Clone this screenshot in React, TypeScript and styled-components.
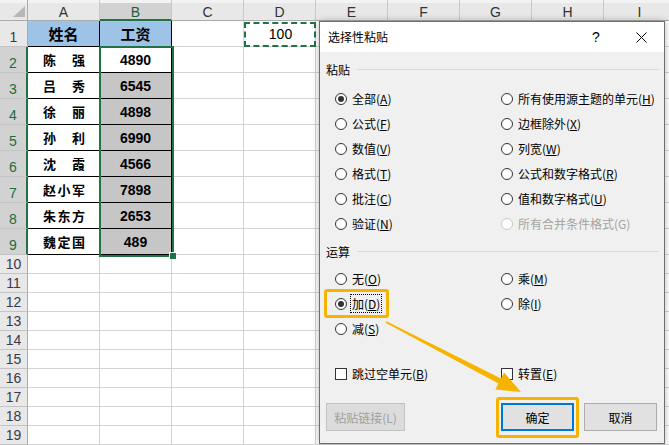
import React from "react";
import styled, { createGlobalStyle } from "styled-components";

const GREEN = "#217346";
const GOLD = "#f6b400";
const BLUE = "#9dc3e6";
const SEL = "#c6c6c6";

const GlobalStyle = createGlobalStyle`
  * { box-sizing: border-box; }
  html, body { margin: 0; padding: 0; background: #fff; overflow: hidden; }
  body { font-family: "Liberation Sans", "Noto Sans CJK SC", sans-serif; }
`;

const COLS = ["A", "B", "C", "D", "E", "F", "G", "H", "I"];
const names = ["陈强", "吕秀", "徐丽", "孙利", "沈霞", "赵小军", "朱东方", "魏定国"];
const pays = ["4890", "6545", "4898", "6990", "4566", "7898", "2653", "489"];

const Page = styled.div`
  position: relative;
  width: 669px;
  height: 445px;
  overflow: hidden;
  background: #fff;
`;

/* ---------- sheet ---------- */

const Sheet = styled.div`
  display: flex;
  flex-direction: column;
`;

const Row = styled.div<{ $h: number }>`
  display: flex;
  flex: none;
  height: ${(p) => p.$h}px;
`;

const Corner = styled.div`
  position: relative;
  width: 28px;
  flex: none;
  background: #e8e8e8;
  box-shadow: inset 0 3px #f3f3f3;
  border-right: 1px solid #ababab;
  border-bottom: 1px solid #ababab;

  &::after {
    content: "";
    position: absolute;
    right: 2px;
    bottom: 3px;
    width: 12px;
    height: 11px;
    background: #b7b7b7;
    clip-path: polygon(100% 0, 100% 100%, 0 100%);
  }
`;

const ColHead = styled.div<{ $sel?: boolean }>`
  width: 72px;
  flex: none;
  display: flex;
  align-items: center;
  justify-content: center;
  padding-top: 4px;
  font-size: 14px;
  color: ${(p) => (p.$sel ? "#1d5e3a" : "#333")};
  background: ${(p) => (p.$sel ? "#d2d2d2" : "#e8e8e8")};
  box-shadow: inset 0 3px #f3f3f3;
  border-right: 1px solid #c8c8c8;
  border-bottom: ${(p) => (p.$sel ? `2px solid ${GREEN}` : "1px solid #ababab")};
`;

const RowHead = styled.div<{ $sel?: boolean; $low?: boolean }>`
  width: 28px;
  flex: none;
  display: flex;
  justify-content: center;
  align-items: ${(p) => (p.$low ? "flex-end" : "center")};
  font-size: 14px;
  line-height: 15px;
  padding-bottom: ${(p) => (p.$low ? "1px" : "0")};
  color: ${(p) => (p.$sel ? "#1d6b3e" : "#3a3a4a")};
  background: ${(p) => (p.$sel ? "#d2d2d2" : "#e8e8e8")};
  border-right: ${(p) => (p.$sel ? `2px solid ${GREEN}` : "1px solid #ababab")};
  border-bottom: 1px solid #c4c4c4;
`;

const Cell = styled.div<{ $bg?: string; $edge?: string }>`
  width: 72px;
  flex: none;
  display: flex;
  align-items: center;
  justify-content: center;
  background: ${(p) => p.$bg || "#fff"};
  border-right: 1px solid ${(p) => p.$edge || "#d4d4d4"};
  border-bottom: 1px solid ${(p) => p.$edge || "#d4d4d4"};
  color: #000;
`;

const NameCell = styled(Cell)`
  justify-content: space-between;
  padding: 0 14px 0 15px;
  font-family: "Noto Sans CJK SC", sans-serif;
  font-weight: 700;
  font-size: 13px;
`;

const HeadText = styled.span`
  font-family: "Noto Sans CJK SC", sans-serif;
  font-weight: 700;
  font-size: 15px;
`;

const Num = styled.span`
  font-weight: 700;
  font-size: 14px;
`;

const Plain = styled.span`
  font-size: 14px;
  padding-left: 2px;
`;

const Selection = styled.div`
  position: absolute;
  left: 99px;
  top: 46px;
  width: 75px;
  height: 211px;
  border: 2px solid ${GREEN};
  pointer-events: none;
`;

const FillHandle = styled.span`
  position: absolute;
  right: -4px;
  bottom: -4px;
  width: 6px;
  height: 6px;
  background: ${GREEN};
  box-shadow: -1px -1px 0 #fff;
`;

const CopyMarquee = styled.div`
  position: absolute;
  left: 244px;
  top: 22px;
  width: 72px;
  height: 25px;
  border: 2px dashed ${GREEN};
  pointer-events: none;
`;

/* ---------- dialog ---------- */

const Dialog = styled.div`
  position: absolute;
  left: 319px;
  top: 21px;
  width: 346px;
  height: 423px;
  display: flex;
  flex-direction: column;
  background: #f0f0f0;
  border: 1px solid #6f6f6f;
  box-shadow: 0 0 7px rgba(0, 0, 0, 0.28);
  font-family: "Noto Sans CJK SC", "Liberation Sans", sans-serif;
  font-size: 12px;
  color: #000;
`;

const TitleBar = styled.div`
  height: 30px;
  flex: none;
  display: flex;
  align-items: center;
  padding-left: 8px;
  background: #fff;
`;

const Title = styled.div`
  flex: 1;
  line-height: 16px;
`;

const TitleButton = styled.div<{ $w: number }>`
  width: ${(p) => p.$w}px;
  height: 30px;
  display: flex;
  align-items: center;
  justify-content: center;
  font-family: "Liberation Sans", sans-serif;
  font-size: 14px;
`;

const Body = styled.div`
  flex: 1;
  display: flex;
  flex-direction: column;
  padding: 8px 5px 0 6px;
`;

const SectionHead = styled.div<{ $mt?: number }>`
  height: 20px;
  display: flex;
  align-items: center;
  gap: 7px;
  margin-top: ${(p) => p.$mt || 0}px;
  line-height: 16px;
`;

const Rule = styled.span`
  flex: 1;
  height: 1px;
  margin-top: -2px;
  background: #d9d9d9;
`;

const OptionGrid = styled.div<{ $mt: number }>`
  display: grid;
  grid-template-columns: 166px 1fr;
  grid-auto-rows: 25px;
  padding-left: 9px;
  margin-top: ${(p) => p.$mt}px;
`;

const Option = styled.div<{ $off?: boolean }>`
  position: relative;
  display: flex;
  align-items: center;
  gap: 5px;
  line-height: 17px;
  white-space: nowrap;
  color: ${(p) => (p.$off ? "#a3a3a3" : "#000")};
`;

const Radio = styled.span<{ $on?: boolean; $off?: boolean }>`
  width: 12px;
  height: 12px;
  flex: none;
  border-radius: 50%;
  border: 1px solid ${(p) => (p.$off ? "#c6c6c6" : "#333")};
  background: #fff;
  display: flex;
  align-items: center;
  justify-content: center;

  &::after {
    content: "";
    display: ${(p) => (p.$on ? "block" : "none")};
    width: 6px;
    height: 6px;
    border-radius: 50%;
    background: #333;
  }
`;

const Check = styled.span`
  width: 12px;
  height: 12px;
  flex: none;
  border: 1px solid #333;
  background: #fff;
`;

const Key = styled.span`
  text-decoration: underline;
  text-underline-offset: 1px;
`;

const Focused = styled.span`
  margin-left: -2px;
  padding: 0 1px;
  border: 1px dotted #000;
`;

const Highlight = styled.span`
  position: absolute;
  border: 3px solid ${GOLD};
  border-radius: 3px;
  pointer-events: none;
`;

const OptionHighlight = styled(Highlight)`
  left: -11px;
  top: -2px;
  width: 65px;
  height: 29px;
`;

const ButtonHighlight = styled(Highlight)`
  left: -5px;
  right: -5px;
  top: -6px;
  bottom: -7px;
`;

const ButtonRow = styled.div`
  display: flex;
  align-items: center;
  gap: 10px;
  margin-top: 17px;
  padding-right: 2px;
`;

const ButtonWrap = styled.div`
  position: relative;
  margin-left: auto;
  display: flex;
`;

const Button = styled.button<{ $w: number; $primary?: boolean }>`
  width: ${(p) => p.$w}px;
  height: 28px;
  padding: 0;
  font: inherit;
  font-size: 12px;
  color: #000;
  background: #e1e1e1;
  border: ${(p) => (p.$primary ? "2px solid #0078d7" : "1px solid #adadad")};

  &:disabled {
    color: #a0a0a0;
    background: #dcdcdc;
    border-color: #c3c3c3;
  }
`;

const ArrowLayer = styled.svg`
  position: absolute;
  left: 0;
  top: 0;
  pointer-events: none;
`;

type Opt = { text: string; k?: string; on?: boolean; off?: boolean };

const pasteOpts: Opt[] = [
  { text: "全部", k: "A", on: true },
  { text: "所有使用源主题的单元", k: "H" },
  { text: "公式", k: "F" },
  { text: "边框除外", k: "X" },
  { text: "数值", k: "V" },
  { text: "列宽", k: "W" },
  { text: "格式", k: "T" },
  { text: "公式和数字格式", k: "R" },
  { text: "批注", k: "C" },
  { text: "值和数字格式", k: "U" },
  { text: "验证", k: "N" },
  { text: "所有合并条件格式(G)", off: true },
];

function Label({ o }: { o: Opt }) {
  if (!o.k) return <span>{o.text}</span>;
  return (
    <span>
      {o.text}(<Key>{o.k}</Key>)
    </span>
  );
}

function EmptyCells({ n }: { n: number }) {
  return (
    <>
      {Array.from({ length: n }, (_, i) => (
        <Cell key={i} />
      ))}
    </>
  );
}

export default function App() {
  return (
    <>
      <GlobalStyle />
      <Page>
        <Sheet>
          <Row $h={21}>
            <Corner />
            {COLS.map((c) => (
              <ColHead key={c} $sel={c === "B"}>
                {c}
              </ColHead>
            ))}
          </Row>
          <Row $h={26}>
            <RowHead $low>1</RowHead>
            <Cell $bg={BLUE} $edge="#000">
              <HeadText>姓名</HeadText>
            </Cell>
            <Cell $bg={BLUE} $edge="#000">
              <HeadText>工资</HeadText>
            </Cell>
            <Cell />
            <Cell>
              <Plain>100</Plain>
            </Cell>
            <EmptyCells n={5} />
          </Row>
          {names.map((n, i) => (
            <Row $h={26} key={n}>
              <RowHead $low $sel>
                {i + 2}
              </RowHead>
              <NameCell $edge="#000">
                {[...n].map((ch, j) => (
                  <span key={j}>{ch}</span>
                ))}
              </NameCell>
              <Cell $edge="#000" $bg={i === 0 ? "#fff" : SEL}>
                <Num>{pays[i]}</Num>
              </Cell>
              <EmptyCells n={7} />
            </Row>
          ))}
          {Array.from({ length: 10 }, (_, i) => (
            <Row $h={19} key={i}>
              <RowHead>{i + 10}</RowHead>
              <EmptyCells n={9} />
            </Row>
          ))}
        </Sheet>

        <Selection>
          <FillHandle />
        </Selection>
        <CopyMarquee />

        <Dialog>
          <TitleBar>
            <Title>选择性粘贴</Title>
            <TitleButton $w={44}>?</TitleButton>
            <TitleButton $w={46}>
              <svg width="11" height="11" viewBox="0 0 11 11">
                <path d="M0.5 0.5 L10.5 10.5 M10.5 0.5 L0.5 10.5" stroke="#000" strokeWidth="1" />
              </svg>
            </TitleButton>
          </TitleBar>
          <Body>
            <SectionHead>
              粘贴
              <Rule />
            </SectionHead>
            <OptionGrid $mt={6}>
              {pasteOpts.map((o) => (
                <Option key={o.text} $off={o.off}>
                  <Radio $on={o.on} $off={o.off} />
                  <Label o={o} />
                </Option>
              ))}
            </OptionGrid>

            <SectionHead $mt={6}>
              运算
              <Rule />
            </SectionHead>
            <OptionGrid $mt={4}>
              <Option>
                <Radio />
                <Label o={{ text: "无", k: "O" }} />
              </Option>
              <Option>
                <Radio />
                <Label o={{ text: "乘", k: "M" }} />
              </Option>
              <Option>
                <OptionHighlight />
                <Radio $on />
                <Focused>
                  加(<Key>D</Key>)
                </Focused>
              </Option>
              <Option>
                <Radio />
                <Label o={{ text: "除", k: "I" }} />
              </Option>
              <Option>
                <Radio />
                <Label o={{ text: "减", k: "S" }} />
              </Option>
            </OptionGrid>

            <OptionGrid $mt={20}>
              <Option>
                <Check />
                <Label o={{ text: "跳过空单元", k: "B" }} />
              </Option>
              <Option>
                <Check />
                <Label o={{ text: "转置", k: "E" }} />
              </Option>
            </OptionGrid>

            <ButtonRow>
              <Button $w={79} disabled>
                粘贴链接(L)
              </Button>
              <ButtonWrap>
                <ButtonHighlight />
                <Button $w={73} $primary>
                  确定
                </Button>
              </ButtonWrap>
              <Button $w={73}>取消</Button>
            </ButtonRow>
          </Body>
        </Dialog>

        <ArrowLayer width="669" height="445" viewBox="0 0 669 445">
          <polygon
            fill={GOLD}
            points="385.6,322.7 498.4,383.5 495.3,389.4 521,392 504.1,372.6 501,378.5 386.4,321.3"
          />
        </ArrowLayer>
      </Page>
    </>
  );
}
